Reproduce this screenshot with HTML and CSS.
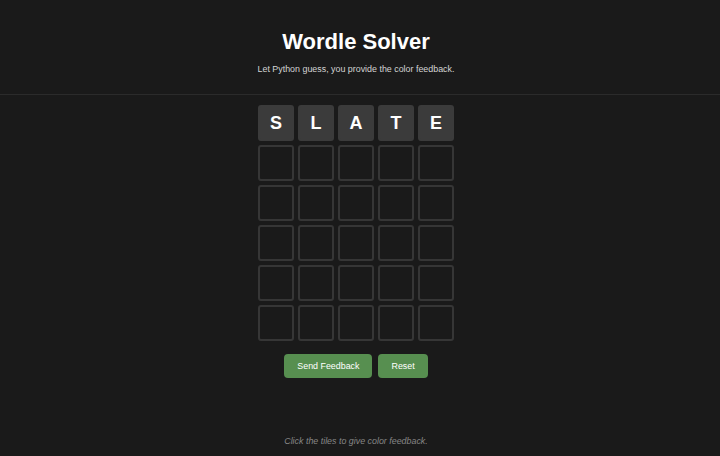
FILE: index.html
```html
<!DOCTYPE html>
<html lang="en">
<head>
<meta charset="utf-8">
<title>Wordle Solver</title>
<link rel="stylesheet" href="styles.css">
</head>
<body>
<header class="header">
  <div class="wrap">
    <h1 class="title">Wordle Solver</h1>
    <p class="subtitle">Let Python guess, you provide the color feedback.</p>
  </div>
</header>
<main class="wrap main">
  <div class="board">
    <div class="tile filled">S</div>
    <div class="tile filled">L</div>
    <div class="tile filled">A</div>
    <div class="tile filled">T</div>
    <div class="tile filled">E</div>
    <div class="tile"></div><div class="tile"></div><div class="tile"></div><div class="tile"></div><div class="tile"></div>
    <div class="tile"></div><div class="tile"></div><div class="tile"></div><div class="tile"></div><div class="tile"></div>
    <div class="tile"></div><div class="tile"></div><div class="tile"></div><div class="tile"></div><div class="tile"></div>
    <div class="tile"></div><div class="tile"></div><div class="tile"></div><div class="tile"></div><div class="tile"></div>
    <div class="tile"></div><div class="tile"></div><div class="tile"></div><div class="tile"></div><div class="tile"></div>
  </div>
  <div class="actions">
    <button class="btn">Send Feedback</button>
    <button class="btn">Reset</button>
  </div>
  <p class="hint">Click the tiles to give color feedback.</p>
</main>
</body>
</html>
```
FILE: styles.css
```css
html, body {
  margin: 0;
  padding: 0;
  background: #1a1a1a;
  font-family: "Liberation Sans", Arial, sans-serif;
  color: #fff;
}
.wrap {
  margin-right: 8px;
  display: flex;
  flex-direction: column;
  align-items: center;
}
.header {
  border-bottom: 1px solid #2b2b2b;
  padding: 29px 0 20px;
  height: 45px;
}
.title {
  margin: 0;
  font-size: 22px;
  font-weight: bold;
  line-height: 25px;
  color: #fff;
}
.subtitle {
  margin: 10px 0 0;
  font-size: 8.9px;
  line-height: 10px;
  color: #d4d4d4;
}
.main {
  padding-top: 10px;
}
.board {
  display: grid;
  grid-template-columns: repeat(5, 36px);
  grid-auto-rows: 36px;
  gap: 4px;
}
.tile {
  box-sizing: border-box;
  border: 2px solid #363636;
  border-radius: 3px;
  display: flex;
  align-items: center;
  justify-content: center;
  font-size: 18px;
  font-weight: bold;
  color: #fff;
}
.tile.filled {
  background: #3b3b3b;
  border-color: #3b3b3b;
}
.actions {
  display: flex;
  gap: 6px;
  margin-top: 13px;
}
.btn {
  font-family: "Liberation Sans", Arial, sans-serif;
  font-size: 8.9px;
  line-height: 10px;
  color: #fff;
  background: #578f50;
  border: none;
  border-radius: 4px;
  padding: 7px 13px;
  height: 24px;
}
.hint {
  margin: 58px 0 0;
  font-size: 8.9px;
  line-height: 10px;
  font-style: italic;
  color: #868686;
}
```
